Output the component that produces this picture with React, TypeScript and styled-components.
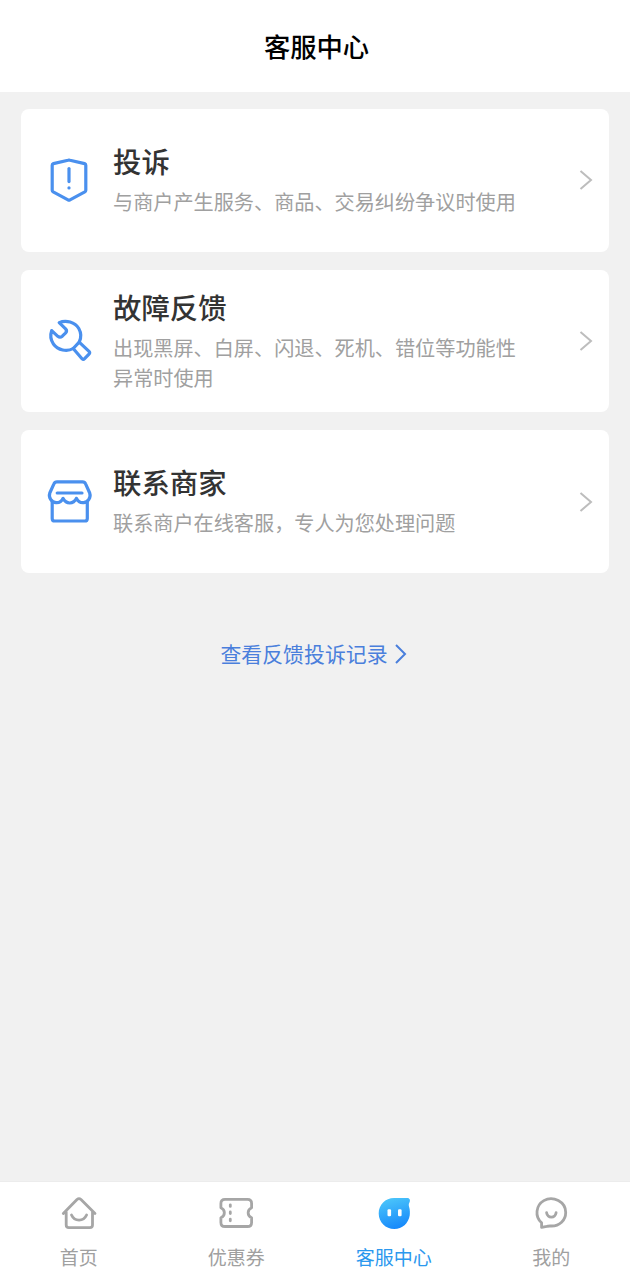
import React from 'react';
import styled, { createGlobalStyle } from 'styled-components';

const GlobalStyle = createGlobalStyle`
  * { box-sizing: border-box; }
  body {
    margin: 0;
    background: #f1f1f1;
    font-family: "Noto Sans CJK SC", sans-serif;
  }
`;

const Page = styled.div`
  display: flex;
  flex-direction: column;
  height: 1280px;
  background: #f1f1f1;
`;

const Header = styled.header`
  display: flex;
  align-items: center;
  justify-content: center;
  height: 92px;
  padding: 0 0 0 3px;
  background: #fff;
`;

const Title = styled.h1`
  margin: 0;
  font-size: 26.3px;
  line-height: 36px;
  font-weight: 500;
  color: #000;
`;

const Main = styled.main`
  flex: 1;
  display: flex;
  flex-direction: column;
  align-items: center;
  padding: 17px 21px 0;
`;

const CardList = styled.div`
  display: flex;
  flex-direction: column;
  gap: 18px;
  width: 100%;
`;

const Card = styled.div`
  display: flex;
  align-items: center;
  height: 142.7px;
  padding: 0 16px 0 25px;
  border-radius: 8px;
  background: #fff;
`;

const CardIcon = styled.svg`
  flex: none;
  width: 48px;
  height: 48px;
  fill: none;
  stroke: #4a90ee;
  stroke-width: 3.2;
  stroke-linecap: round;
  stroke-linejoin: round;
`;

const CardBody = styled.div`
  flex: 1;
  padding-left: 19px;
`;

const CardTitle = styled.h2`
  margin: 0 0 5px;
  font-size: 28.4px;
  line-height: 42px;
  font-weight: 500;
  color: #333;
`;

const CardText = styled.p`
  margin: 0 0 4px;
  width: 412px;
  font-size: 20.15px;
  line-height: 30px;
  font-weight: 400;
  color: #a0a0a0;
`;

const Arrow = styled.svg<{ $color: string }>`
  flex: none;
  width: 14px;
  height: 22px;
  fill: none;
  stroke: ${(p) => p.$color};
  stroke-width: 2;
`;

const RecordLink = styled.a`
  display: flex;
  align-items: center;
  gap: 6px;
  margin: 65px 2px 0 0;
  font-size: 20.9px;
  line-height: 30px;
  color: #4a7fdc;
`;

const TabBar = styled.nav`
  display: flex;
  height: 99px;
  border-top: 1px solid #ececec;
  background: #fff;
`;

const Tab = styled.div<{ $active?: boolean }>`
  flex: 1;
  display: flex;
  flex-direction: column;
  align-items: center;
  padding-top: 11px;
  gap: 10px;
  font-size: 19px;
  line-height: 28px;
  font-weight: 400;
  color: ${(p) => (p.$active ? '#2b98ee' : '#a0a0a0')};
`;

const TabIcon = styled.svg`
  width: 40px;
  height: 40px;
  fill: none;
  stroke: #a6a6a6;
  stroke-width: 2.8;
  stroke-linecap: round;
  stroke-linejoin: round;
`;

const ShieldIcon = () => (
  <CardIcon viewBox="0 0 48 48">
    <path d="M22 4.2Q23 3.9 24 4.2L38.6 7.6Q39.8 8 39.8 9.2V34.2Q39.8 35.3 38.8 35.9L24 43.8Q23 44.4 22 43.8L7.2 35.9Q6.2 35.3 6.2 34.2V9.2Q6.2 8 7.4 7.6Z" />
    <path d="M23 12.6V25.6" />
    <path d="M23 31.8V31.9" />
  </CardIcon>
);

const WrenchIcon = () => (
  <CardIcon viewBox="0 0 48 48">
    <path d="M13.2 5.6C20 2.6 29 5 32.8 11.5C35.2 15.8 35.3 21 33.2 25.2L27.2 31.5C21 35.2 12 33.3 7.4 27C4.6 23 4 18.5 5.7 13.6L11.8 19.3C13.3 20.5 15 20.3 16.3 19.2L19.4 16.2C20.9 14.6 20.9 13.2 19.6 11.8Z" />
    <path d="M33.2 25.2L43 34.4Q44.3 35.8 43 37.1L38.6 41.7Q37.3 43 36 41.7L27.2 31.5" />
  </CardIcon>
);

const StoreIcon = () => (
  <CardIcon viewBox="0 0 48 48">
    <path d="M11 3.8H36.5Q38.8 3.8 39.6 5.8L43.7 15C45.2 19.5 42 24.5 37.5 24.7C34.2 24.9 31.7 23 30.5 20.3C28.8 23.6 26.8 25 23.8 25C20.8 25 18.7 23.6 17 20.3C15.8 23 13.3 24.9 10 24.7C5.5 24.5 2.3 19.5 3.8 15L7.9 5.8Q8.7 3.8 11 3.8Z" />
    <path d="M11.2 15H36" />
    <path d="M6.2 24V40.4Q6.2 43 8.8 43H38.7Q41.3 43 41.3 40.4V24" />
  </CardIcon>
);

const HomeIcon = () => (
  <TabIcon viewBox="0 0 40 40">
    <path d="M4.3 20.5L18 6.5Q20 4.7 22 6.5L36 20.5M7.2 19V32Q7.2 34.7 9.9 34.7H30.8Q33.5 34.7 33.5 32V19" />
    <path d="M12.5 22C15.5 28.8 24.5 28.8 27.6 22" />
  </TabIcon>
);

const TicketIcon = () => (
  <TabIcon viewBox="0 0 40 40">
    <path d="M9 6.4H31.5Q35.6 6.4 35.6 10.5V14.7C31 16.8 31 22.8 35.6 24.8V29.4Q35.6 33.5 31.5 33.5H9Q4.9 33.5 4.9 29.4V24.8C9.5 22.8 9.5 16.8 4.9 14.7V10.5Q4.9 6.4 9 6.4Z" />
    <path d="M14.3 11.8V13.4M14.3 19V20.6M14.3 26.2V27.8" />
  </TabIcon>
);

const ServiceIcon = () => (
  <TabIcon viewBox="0 0 40 40">
    <defs>
      <linearGradient id="service-fill" x1="0.35" y1="0" x2="0.65" y2="1">
        <stop offset="0" stopColor="#4bc5fa" />
        <stop offset="1" stopColor="#1587fb" />
      </linearGradient>
    </defs>
    <path
      d="M20 5H33.2C36 5 36.6 7.5 35.3 9.8C34.5 11.3 34.7 12.6 35.2 14.3C36 17 36 20 35.7 22.5C34.5 30.2 28.2 36 20.3 36C11.6 36 4.7 29.2 4.7 20.5C4.7 11.8 11.4 5 20 5Z"
      fill="url(#service-fill)"
      stroke="none"
    />
    <rect x="13.5" y="16.3" width="3.6" height="7" rx="1.2" fill="#fff" stroke="none" />
    <rect x="24" y="16.3" width="3.6" height="7" rx="1.2" fill="#fff" stroke="none" />
  </TabIcon>
);

const MineIcon = () => (
  <TabIcon viewBox="0 0 40 40">
    <path d="M10.6 34.4V29.8C3.5 23.4 4.8 12.3 12.8 7.6C22.3 2.2 34.7 9 34.7 19.4C34.7 27.4 28.4 33 20.6 33C18.8 33 17.4 32.8 15.8 33.4Z" />
    <path d="M15.6 19.7C16.7 25.5 24 25.5 25.1 19.7" />
  </TabIcon>
);

const cards = [
  { title: '投诉', text: '与商户产生服务、商品、交易纠纷争议时使用', Icon: ShieldIcon },
  { title: '故障反馈', text: '出现黑屏、白屏、闪退、死机、错位等功能性异常时使用', Icon: WrenchIcon },
  { title: '联系商家', text: '联系商户在线客服，专人为您处理问题', Icon: StoreIcon },
];

const tabs = [
  { label: '首页', Icon: HomeIcon },
  { label: '优惠券', Icon: TicketIcon },
  { label: '客服中心', Icon: ServiceIcon, active: true },
  { label: '我的', Icon: MineIcon },
];

export default function App() {
  return (
    <Page lang="zh-CN">
      <GlobalStyle />
      <Header>
        <Title>客服中心</Title>
      </Header>
      <Main>
        <CardList>
          {cards.map(({ title, text, Icon }) => (
            <Card key={title}>
              <Icon />
              <CardBody>
                <CardTitle>{title}</CardTitle>
                <CardText>{text}</CardText>
              </CardBody>
              <Arrow $color="#bdbdbd" viewBox="0 0 14 22">
                <path d="M1.5 2L12 11L1.5 20" />
              </Arrow>
            </Card>
          ))}
        </CardList>
        <RecordLink>
          查看反馈投诉记录
          <Arrow $color="#4a7fdc" viewBox="0 0 14 22">
            <path d="M2 3L11 12L2 21" />
          </Arrow>
        </RecordLink>
      </Main>
      <TabBar>
        {tabs.map(({ label, Icon, active }) => (
          <Tab key={label} $active={active}>
            <Icon />
            {label}
          </Tab>
        ))}
      </TabBar>
    </Page>
  );
}
